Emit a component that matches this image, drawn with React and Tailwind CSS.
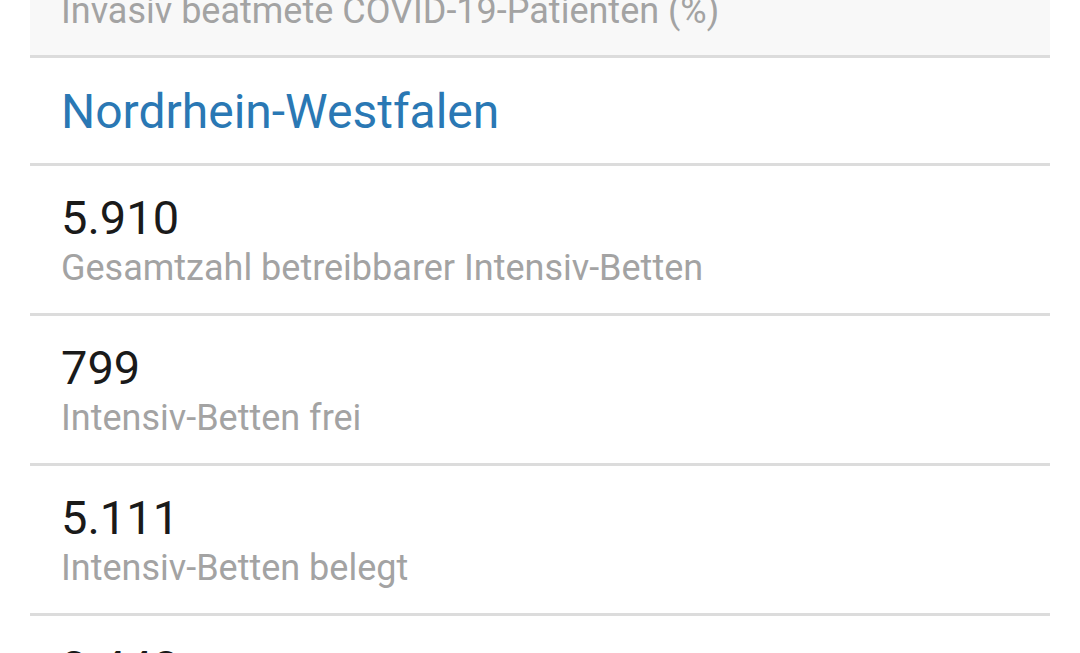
const rows = [
  { value: "5.910", label: "Gesamtzahl betreibbarer Intensiv-Betten" },
  { value: "799", label: "Intensiv-Betten frei" },
  { value: "5.111", label: "Intensiv-Betten belegt" },
  { value: "3.448", label: "COVID-19-Patienten in intensivmedizinischer Behandlung" },
]

export default function App() {
  return (
    <div className="h-[653px] w-[1080px] overflow-hidden bg-white font-['Roboto',sans-serif]">
      <div className="mx-[30px] -mt-[7px]">
        {/* previous state, mostly scrolled out */}
        <div className="border-b-[3px] border-[#dcdcdc] bg-[#f8f8f8] pb-[26px] pl-[31px]">
          <p className="text-[36px] leading-[36px] text-[#a3a3a3]">
            Invasiv beatmete COVID-19-Patienten (%)
          </p>
        </div>

        <div className="border-b-[3px] border-[#dcdcdc] pb-[27px] pl-[31px] pt-[30px]">
          <h2 className="text-[48px] leading-[48px] text-[#2a78b4]">Nordrhein-Westfalen</h2>
        </div>

        {rows.map((row) => (
          <div
            key={row.value}
            className="h-[150px] border-b-[3px] border-[#dcdcdc] pl-[31px] pt-[28px]"
          >
            <p className="text-[47px] leading-[47px] text-[#1a1a1a]">{row.value}</p>
            <p className="mt-[9px] text-[36px] leading-[36px] text-[#a3a3a3]">{row.label}</p>
          </div>
        ))}
      </div>
    </div>
  )
}
